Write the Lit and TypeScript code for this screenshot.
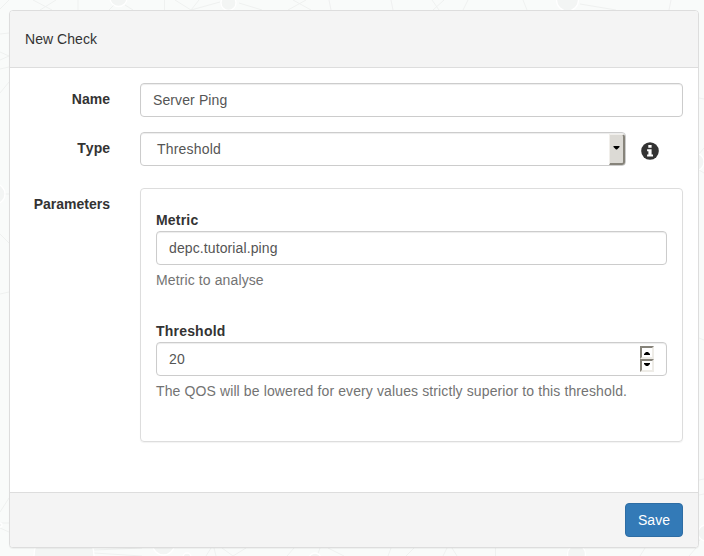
import { LitElement, html, css } from "lit";
import { customElement } from "lit/decorators.js";

@customElement("app-backdrop")
class AppBackdrop extends LitElement {
  static styles = css`
    :host { display: block; }
    svg { display: block; width: 704px; height: 556px; }
    .line { stroke: #eff1f0; stroke-width: 1; fill: none; }
    .dot { fill: #f3f5f4; stroke: #fff; stroke-width: 1.3; }
  `;
  render() {
    return html`<svg viewBox="0 0 704 556" aria-hidden="true">
      <path class="line" d="M9 0L0 9M33 0L52 10M56 0L40 10M78 0V10M109 10L115 4M125 5L133 10M164.500 0V10M175 0L191 10L199 0M191 10L220 2M239 3L262 10M288 10L306 0M293 0L311 10M329 0L331 10
        M391 0L393 10M432 0L439 10M444 0L433 10M468 0L463 10M523 0L527 10M580 4L616 10M671 0L669 10"/>
      <path class="line" d="M0 34L9 33M0 52L9 56L0 60M0 69L9 67M0 93L9 82M0 194H9M0 234L9 243M0 294L9 292M0 512L9 498M0 523H9M0 528L9 532"/>
      <path class="line" d="M699 98L704 99M699 154L704 148M699 170L704 173M699 338L704 340M699 480L704 479M699 495L704 494M699 541L704 535"/>
      <path class="line" d="M94 550L142 548M94 553L142 556M211 548L206 556M214 548L216 556M222 548L233 556L246 548M294 548L287 556M320 548L317 556M328 548L344 556M391 548L388 556M414 548L406 556M447 548L443 556M452 548L457 556M495.500 548V556M645 548L640 556M696 548L689 556"/>
      <circle class="dot" cx="118.500" cy="-2" r="8.500"/>
      <circle class="dot" cx="228.500" cy="3" r="7.500"/>
      <circle class="dot" cx="567.500" cy="0" r="11"/>
      <circle class="dot" cx="-5" cy="194" r="10"/>
      <circle class="dot" cx="695" cy="162" r="9"/>
      <circle class="dot" cx="706" cy="533" r="8"/>
      <circle class="dot" cx="0" cy="525" r="2"/>
      <circle class="dot" cx="64" cy="556" r="30"/>
      <circle class="dot" cx="163.500" cy="544" r="11"/>
      <circle class="dot" cx="187" cy="557" r="4"/>
      <circle class="dot" cx="315" cy="559" r="6"/>
      <circle class="dot" cx="576.500" cy="554" r="9"/>
    </svg>`;
  }
}

@customElement("app-root")
class AppRoot extends LitElement {
  static styles = css`
    :host {
      display: block; position: relative; box-sizing: border-box;
      width: 704px; height: 556px; padding: 10px 5px 8px 9px;
      overflow: hidden; background: #f9fbfa; color: #333;
      font: 14px/20px "Liberation Sans", Arial, sans-serif;
    }
    *, *::before { box-sizing: border-box; }
    .backdrop { position: absolute; inset: 0; }
    .panel {
      position: relative; display: flex; flex-direction: column;
      width: 690px; height: 538px; background: #fff;
      border: 1px solid #ddd; border-radius: 4px; overflow: hidden;
      box-shadow: 0 1px 1px rgba(0, 0, 0, .05);
    }
    .header { height: 57px; padding: 18px 15px; background: #f4f4f4; border-bottom: 1px solid #ddd; letter-spacing: .05px; }
    .body { flex: 1; padding: 15px; }
    .footer {
      height: 55px; padding: 10px 15px; display: flex; justify-content: flex-end;
      background: #f4f4f4; border-top: 1px solid #ddd;
    }
    .row { display: grid; grid-template-columns: 85px 1fr; column-gap: 30px; align-items: start; }
    .type { margin-top: 15px; }
    .params { margin-top: 22px; }
    .label { font-weight: 700; text-align: right; padding-top: 6px; font-kerning: none; }
    .control {
      display: block; width: 100%; height: 34px; margin: 0; padding: 6px 12px;
      font: inherit; letter-spacing: .11px; color: #555; background: #fff; outline: 0;
      border: 1px solid #ccc; border-radius: 4px;
      box-shadow: inset 0 1px 1px rgba(0, 0, 0, .075);
      appearance: none;
    }
    .pick { display: flex; align-items: center; gap: 15px; }
    .select { display: flex; justify-content: space-between; width: 486px; padding: 0 0 0 16px; line-height: 32px; letter-spacing: .2px; }
    .drop {
      width: 16px; height: 31px; margin-top: 1px; padding: 0 0 2px 0; display: grid; place-items: center;
      background: #dcdad5; border: solid; border-width: 1px 2px 2px 1px;
      border-color: #f1efeb #86837a #86837a #f1efeb; border-radius: 0 3px 3px 0;
    }
    .drop svg, .spin svg { display: block; }
    .info { display: block; margin-top: 4px; }
    .well {
      height: 254px; padding: 21px 15px; border: 1px solid #ddd; border-radius: 4px;
      box-shadow: 0 1px 1px rgba(0, 0, 0, .05);
    }
    .field + .field { margin-top: 31px; }
    .name { display: block; font-weight: 700; height: 21px; letter-spacing: .2px; }
    .help { color: #737373; margin-top: 5px; letter-spacing: .115px; }
    .number { display: flex; justify-content: space-between; }
    .spinner { width: 14px; height: 26px; margin-top: -3px; }
    .spin {
      width: 14px; height: 13px; display: grid; justify-items: center; align-items: start; padding-top: 4px;
      background: #fff; border: 2px solid; border-color: #86837a #eeece7 #eeece7 #86837a;
    }
    .spin.down { padding-top: 2px; }
    .save {
      width: 58px; height: 34px; padding: 0; font: inherit; color: #fff;
      background: #337ab7; border: 1px solid #2e6da4; border-radius: 4px;
    }
  `;

  render() {
    return html`
      <app-backdrop class="backdrop"></app-backdrop>
      <div class="panel">
        <div class="header">New Check</div>
        <div class="body">
          <div class="row">
            <label class="label">Name</label>
            <input class="control" type="text" .value=${"Server Ping"} />
          </div>
          <div class="row type">
            <label class="label">Type</label>
            <div class="pick">
              <div class="control select" role="combobox">
                <span>Threshold</span>
                <span class="drop"><svg width="7" height="4" viewBox="0 0 7 4"><path d="M0.500 0H6.500V1L4 3.500H3L0.500 1Z" /></svg></span>
              </div>
              <svg class="info" width="18" height="18" viewBox="0 0 18 18">
                <circle cx="9" cy="9" r="8.800" fill="#333" />
                <path fill="#fff" d="M7.300 3H10.600V5.800H7.300ZM6.100 7.200H10.600V12.400H12V14.400H6.100V12.400H7.400V9.200H6.100Z" />
              </svg>
            </div>
          </div>
          <div class="row params">
            <label class="label">Parameters</label>
            <div class="well">
              <div class="field">
                <label class="name">Metric</label>
                <input class="control" type="text" .value=${"depc.tutorial.ping"} />
                <div class="help">Metric to analyse</div>
              </div>
              <div class="field">
                <label class="name">Threshold</label>
                <div class="control number">
                  <span>20</span>
                  <div class="spinner">
                    <div class="spin"><svg width="6" height="3" viewBox="0 0 6 3"><path d="M0 3V2L2 0H4L6 2V3Z" /></svg></div>
                    <div class="spin down"><svg width="6" height="3" viewBox="0 0 6 3"><path d="M0 0H6V1L4 3H2L0 1Z" /></svg></div>
                  </div>
                </div>
                <div class="help">The QOS will be lowered for every values strictly superior to this threshold.</div>
              </div>
            </div>
          </div>
        </div>
        <div class="footer"><button class="save">Save</button></div>
      </div>
    `;
  }
}
